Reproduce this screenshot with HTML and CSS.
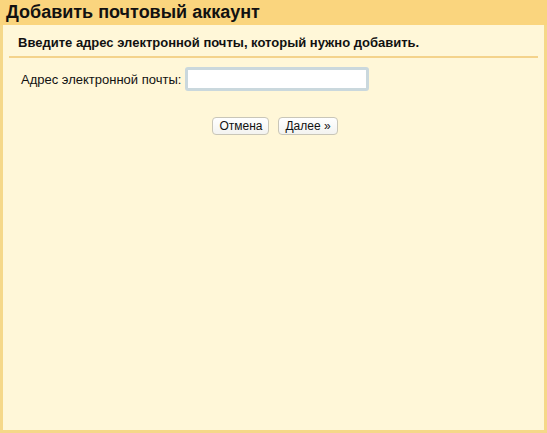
FILE: index.html
```html
<!DOCTYPE html>
<html>
<head>
  <title>Добавить почтовый аккаунт</title>
  <meta charset="utf-8">
  <link rel="stylesheet" href="styles.css">
</head>
<body>
  <div class="dialog">
    <h1 class="dialog-title">Добавить почтовый аккаунт</h1>
    <div class="dialog-body">
      <p class="intro">Введите адрес электронной почты, который нужно добавить.</p>
      <div class="field-row">
        <label for="email">Адрес электронной почты:</label>
        <input type="text" id="email" class="email-input" autofocus>
      </div>
      <div class="actions">
        <button class="btn">Отмена</button>
        <button class="btn">Далее »</button>
      </div>
    </div>
  </div>
</body>
</html>
```

FILE: styles.css
```css
html, body {
  height: 100%;
}
body {
  margin: 0;
  font-family: "Liberation Sans", Arial, sans-serif;
  color: #111;
  background-color: #fff7d8;
}
.dialog {
  height: 100%;
  box-sizing: border-box;
  border: 3px solid #f5d889;
  border-top: none;
  background-color: #fff7d8;
  display: flex;
  flex-direction: column;
}
.dialog-title {
  margin: 0 -3px;
  padding: 1px 6px 0;
  height: 24px;
  background-color: #fad57e;
  font-size: 18px;
  font-weight: bold;
  line-height: 22px;
}
.dialog-body {
  padding: 0 6px;
}
.intro {
  margin: 0;
  padding: 10px 9px 6px;
  border-bottom: 2px solid #f4d38b;
  font-size: 13px;
  font-weight: bold;
}
.field-row {
  display: flex;
  align-items: center;
  padding: 9px 0 0 12px;
  font-size: 13px;
}
.field-row label {
  margin-right: 4px;
}
.email-input {
  width: 172px;
  height: 18px;
  padding: 0 3px;
  border: 3px solid #cad8dd;
  border-radius: 3px;
  background: #fff;
  outline: none;
  font: 13px "Liberation Sans", Arial, sans-serif;
}
.actions {
  display: flex;
  justify-content: center;
  gap: 9px;
  padding: 26px 0 0 3px;
}
.btn {
  padding: 0 6px;
  height: 18px;
  border: 1px solid #c9c6b8;
  border-radius: 4px;
  background: linear-gradient(#fff, #f3f3f0);
  font: 12px "Liberation Sans", Arial, sans-serif;
  color: #111;
}
```
